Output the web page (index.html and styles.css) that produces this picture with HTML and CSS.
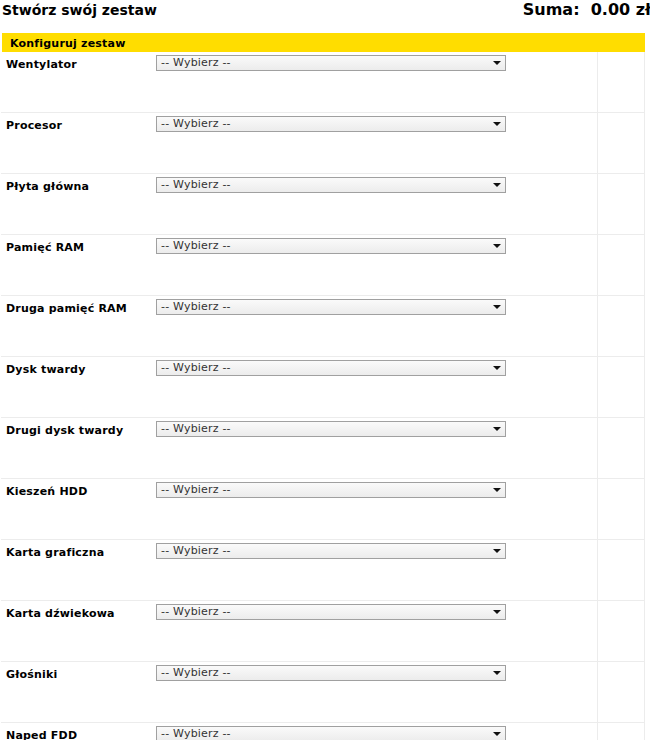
FILE: index.html
```html
<!DOCTYPE html>
<html lang="pl">
<head>
    <meta charset="UTF-8">
    <meta name="viewport" content="width=device-width, initial-scale=1.0">
    <title>Konfigurator zestawu</title>
    <link rel="stylesheet" href="styles.css">
</head>
<body>
    <div class="page">
        <div class="top">
            <h1>Stwórz swój zestaw</h1>
            <div class="total">Suma:&nbsp; <span id="total">0.00</span> zł</div>
        </div>

        <table class="config">
            <thead>
                <tr>
                    <th colspan="3">Konfiguruj zestaw</th>
                </tr>
            </thead>
            <tbody id="parts"></tbody>
        </table>
    </div>

    <script>
        const parts = [
            'Wentylator', 'Procesor', 'Płyta główna', 'Pamięć RAM',
            'Druga pamięć RAM', 'Dysk twardy', 'Drugi dysk twardy',
            'Kieszeń HDD', 'Karta graficzna', 'Karta dźwiekowa',
            'Głośniki', 'Naped FDD'
        ];

        const tbody = document.getElementById('parts');
        parts.forEach((name, index) => {
            const tr = document.createElement('tr');
            tr.innerHTML = `
                <td class="label">${name}</td>
                <td class="choice">
                    <span class="select-wrap">
                        <select name="part${index}">
                            <option value="">-- Wybierz --</option>
                        </select>
                    </span>
                </td>
                <td class="price"></td>
            `;
            tbody.appendChild(tr);
        });
    </script>
</body>
</html>
```

FILE: styles.css
```css
body {
    margin: 0;
    font-family: "DejaVu Sans", Verdana, sans-serif;
    color: #000;
    background-color: #fff;
    overflow: hidden;
}
.page {
    width: 650px;
    overflow: hidden;
}
.top {
    display: flex;
    justify-content: space-between;
    align-items: baseline;
    width: 649px;
    padding: 0 0 0 2px;
    height: 33px;
}
h1 {
    margin: 0;
    padding-top: 1px;
    font-size: 14px;
    font-weight: bold;
}
.total {
    font-size: 16px;
    font-weight: bold;
}
.config {
    width: 645px;
    border-collapse: collapse;
    font-size: 11px;
}
.config th {
    background-color: #ffdd00;
    text-align: left;
    font-weight: bold;
    padding: 3px 0 2px 8px;
    border-left: 2px solid #fff;
    height: 14px;
    letter-spacing: 0.2px;
}
.config td {
    vertical-align: top;
    border-bottom: 1px solid #ececec;
    padding: 0;
}
.label {
    width: 150px;
    height: 54px;
    font-weight: bold;
    letter-spacing: 0.2px;
    padding: 6px 0 0 5px !important;
}
.choice {
    height: 57px;
    padding: 3px 0 0 0 !important;
}
.price {
    width: 46px;
    height: 60px;
    border-left: 1px solid #ececec;
    border-right: 1px solid #ececec;
}
.select-wrap {
    position: relative;
    display: inline-block;
}
.select-wrap select {
    appearance: none;
    -webkit-appearance: none;
    width: 350px;
    height: 16px;
    margin: 0;
    padding: 0 0 0 4px;
    border: 1px solid #a0a0a0;
    border-radius: 0;
    background: linear-gradient(#fafafa, #ececec);
    font-family: "DejaVu Sans", Verdana, sans-serif;
    font-size: 11px;
    letter-spacing: 0.2px;
    color: #333;
    line-height: 14px;
}
/* small dropdown arrow */
.select-wrap::after {
    content: "";
    position: absolute;
    right: 5px;
    top: 6px;
    border-left: 4px solid transparent;
    border-right: 4px solid transparent;
    border-top: 4px solid #111;
    pointer-events: none;
}
```
